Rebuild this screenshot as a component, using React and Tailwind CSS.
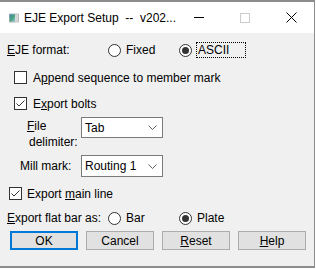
import { useState } from 'react'

const font = { fontFamily: '"Liberation Sans", Arial, sans-serif' }

function Radio({ checked, label, className = '' }) {
  return (
    <div className={`flex items-center ${className}`}>
      <span className="w-[13px] h-[13px] rounded-full border border-[#333] bg-white flex items-center justify-center">
        {checked && <span className="w-[7px] h-[7px] rounded-full bg-[#333]" />}
      </span>
      {label}
    </div>
  )
}

function Check({ checked }) {
  return (
    <span className="w-[13px] h-[13px] border border-[#333] bg-white flex items-center justify-center">
      {checked && (
        <svg width="11" height="11" viewBox="0 0 11 11">
          <path d="M1.5 5.5 L4 8 L9.5 2.5" fill="none" stroke="#333" strokeWidth="1" />
        </svg>
      )}
    </span>
  )
}

function Combo({ value, h }) {
  return (
    <div className={`w-[82px] ${h} bg-white border border-[#7a7a7a] flex items-center justify-between pl-[3px] pr-[5px]`}>
      <span>{value}</span>
      <svg width="9" height="5" viewBox="0 0 9 5">
        <path d="M0.5 0.5 L4.5 4.5 L8.5 0.5" fill="none" stroke="#606060" strokeWidth="1" />
      </svg>
    </div>
  )
}

function Btn({ children, focus }) {
  return (
    <button
      className={`w-[68px] h-[19px] bg-[#e1e1e1] flex items-center justify-center text-black ${
        focus ? 'border-2 border-[#0078d7]' : 'border border-[#adadad]'
      }`}
    >
      {children}
    </button>
  )
}

export default function App() {
  const [format] = useState('ascii')

  return (
    <div className="w-[316px] h-[269px] bg-white text-[12px] text-black leading-none" style={font}>
      <div className="w-[315px] h-[268px] border-t-2 border-r border-b-2 border-[#8c8c8c] bg-[#f0f0f0] flex flex-col">
        {/* title bar */}
        <div className="h-[31px] bg-white flex items-center shrink-0">
          <svg className="ml-[9px]" width="16" height="14" viewBox="0 0 16 14">
            <rect x="0.5" y="0.5" width="15" height="13" fill="#e8e8e8" stroke="#9a9a9a" />
            <rect x="1" y="1" width="9" height="12" fill="url(#g)" />
            <rect x="11" y="2" width="3" height="10" fill="#d4d4d4" />
            <defs>
              <linearGradient id="g" x1="0" y1="0" x2="1" y2="1">
                <stop offset="0" stopColor="#3e7fc1" />
                <stop offset="0.5" stopColor="#4aa37a" />
                <stop offset="1" stopColor="#9cc6e6" />
              </linearGradient>
            </defs>
          </svg>
          <span className="ml-[5px] whitespace-pre">EJE Export Setup  --  v202...</span>
          <div className="ml-auto flex h-full">
            <div className="w-[46px] flex items-center justify-center">
              <span className="w-[10px] h-px bg-black" />
            </div>
            <div className="w-[46px] flex items-center justify-center">
              <span className="w-[10px] h-[10px] border border-[#cccccc]" />
            </div>
            <div className="w-[46px] flex items-center justify-center">
              <svg width="11" height="11" viewBox="0 0 11 11">
                <path d="M0.5 0.5 L10.5 10.5 M10.5 0.5 L0.5 10.5" stroke="#000" strokeWidth="1" />
              </svg>
            </div>
          </div>
        </div>

        {/* body */}
        <div className="flex flex-col pt-[9px]">
          <div className="h-[16px] flex items-center pl-[7px]">
            <span className="w-[101px]">
              <u>E</u>JE format:
            </span>
            <Radio checked={format === 'fixed'} label={<span className="ml-[5px]">Fixed</span>} className="w-[71px]" />
            <Radio
              checked={format === 'ascii'}
              label={
                <span className="ml-[4px] px-[1px] h-[16px] flex items-center border border-dotted border-black w-[50px]">
                  ASCII
                </span>
              }
            />
          </div>

          <div className="mt-[13px] h-[13px] flex items-center pl-[14px] gap-[6px]">
            <Check />
            <span>
              A<u>p</u>pend sequence to member mark
            </span>
          </div>

          <div className="mt-[13px] h-[13px] flex items-center pl-[14px] gap-[6px]">
            <Check checked />
            <span>
              E<u>x</u>port bolts
            </span>
          </div>

          <div className="mt-[7px] h-[33px] flex pl-[27px]">
            <div className="w-[54px] flex flex-col pt-[1px]">
              <span className="h-[16px] flex items-center">
                <u>F</u>ile
              </span>
              <span className="h-[16px] flex items-center pl-[2px]">delimiter:</span>
            </div>
            <Combo value="Tab" h="h-[21px]" />
          </div>

          <div className="mt-[5px] h-[22px] flex items-center pl-[20px]">
            <span className="w-[61px]">Mill mark:</span>
            <Combo value="Routing 1" h="h-[22px]" />
          </div>

          <div className="mt-[10px] h-[13px] flex items-center pl-[9px] gap-[5px]">
            <Check checked />
            <span>
              Export <u>m</u>ain line
            </span>
          </div>

          <div className="mt-[10px] h-[16px] flex items-center pl-[7px]">
            <span className="w-[101px]">
              <u>E</u>xport flat bar as:
            </span>
            <Radio label={<span className="ml-[5px]">Bar</span>} className="w-[71px]" />
            <Radio checked label={<span className="ml-[5px]">Plate</span>} />
          </div>

          <div className="mt-[5px] flex gap-[8px] pl-[10px]">
            <Btn focus>OK</Btn>
            <Btn>Cancel</Btn>
            <Btn>
              <span>
                <u>R</u>eset
              </span>
            </Btn>
            <Btn>
              <span>
                <u>H</u>elp
              </span>
            </Btn>
          </div>
        </div>
      </div>
    </div>
  )
}
